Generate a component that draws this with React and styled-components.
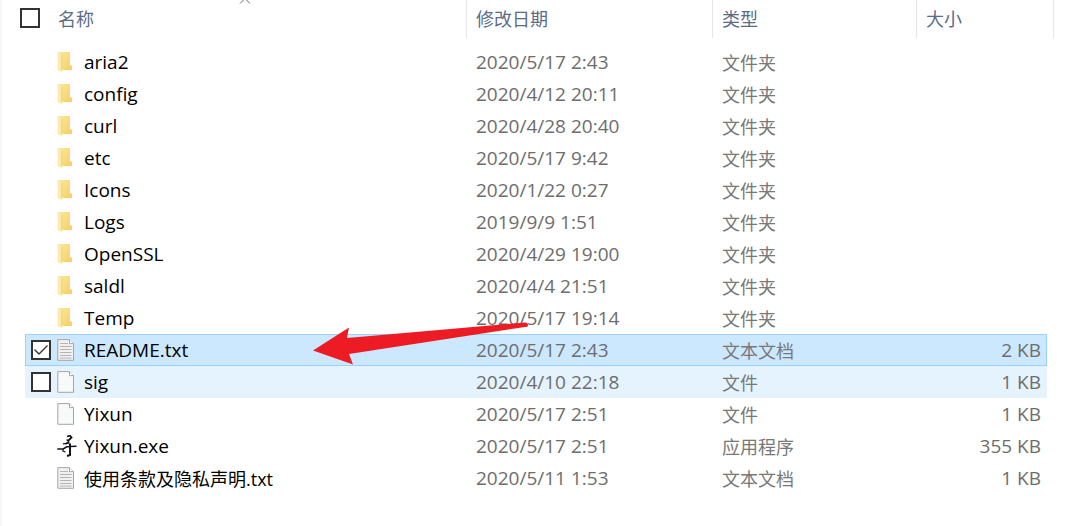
import React, { useState } from 'react';
import styled, { createGlobalStyle } from 'styled-components';

const GlobalStyle = createGlobalStyle`
  * {
    box-sizing: border-box;
  }
  body {
    margin: 0;
    background: #fff;
    font-family: "Open Sans", "Noto Sans CJK SC", sans-serif;
    font-size: 18px;
  }
`

const Pane = styled.main`
  min-height: 100vh;
  padding-right: 26px;
  border-left: 2px solid #f7f7f7;
  overflow: hidden;
`

const FileTable = styled.table`
  display: block;
  thead, tbody {
    display: block;
  }
`

const HeadRow = styled.tr`
  display: grid;
  grid-template-columns: 1fr 246px 204px 137px;
  height: 38px;
  margin-bottom: 8px;
`

const HeadCell = styled.th`
  position: relative;
  display: flex;
  align-items: center;
  gap: 18px;
  padding: 0 0 3px ${props => (props.$first ? 18 : 9)}px;
  border-right: 1px solid #e5e5e5;
  color: #5a6c86;
  font-weight: 400;
`

const SortMark = styled.svg`
  position: absolute;
  top: -3px;
  left: 51%;
  width: 12px;
  height: 7px;
`

const Row = styled.tr`
  display: grid;
  grid-template-columns: 1fr 246px 204px 130px;
  height: 32px;
  margin: 0 7px 0 23px;
  background: ${props => (props.$selected ? '#cce8ff' : props.$hovered ? '#e5f3ff' : 'transparent')};
  box-shadow: ${props => (props.$selected ? 'inset 0 0 0 1px #99d1ff' : 'none')};
`

const Cell = styled.td`
  position: relative;
  display: flex;
  align-items: center;
  justify-content: ${props => (props.$right ? 'flex-end' : 'flex-start')};
  padding: 0 6px 0 9px;
  color: ${props => (props.$latin ? '#6d6d6d' : '#787878')};
  font-size: ${props => (props.$latin ? 19 : 18)}px;
  white-space: nowrap;
`

const NameCell = styled(Cell)`
  padding-left: 6px;
  color: #000;
`

const Check = styled.input`
  appearance: none;
  flex: none;
  width: 20px;
  height: 20px;
  margin: 0;
  border: 2px solid #333;
  background: #fff;
  visibility: ${props => (props.$shown ? 'visible' : 'hidden')};
  &:checked {
    background: #fff url("data:image/svg+xml,%3Csvg xmlns='http://www.w3.org/2000/svg' viewBox='0 0 16 16'%3E%3Cpath d='M1.5 7.5l4.5 4.5 8.500-8.500' fill='none' stroke='%23333' stroke-width='1.400'/%3E%3C/svg%3E") center / 16px 16px no-repeat;
  }
`

const IconBox = styled.span`
  display: flex;
  flex: none;
  width: 20px;
  height: 22px;
  margin: 0 7px 0 6px;
`

const Arrow = styled.svg`
  position: absolute;
  top: -13px;
  left: -155px;
  width: 218px;
  height: 44px;
  pointer-events: none;
`

const FolderIcon = () => (
  <svg width="20" height="22" viewBox="0 0 20 22" aria-hidden="true">
    <defs>
      <linearGradient id="folder" x1="0" y1="0" x2="1" y2="1">
        <stop offset="0" stopColor="#fbe7a0" />
        <stop offset="1" stopColor="#f5cf66" />
      </linearGradient>
    </defs>
    <path d="M1 1h12v13l2 1v4H4z" fill="url(#folder)" />
    <path d="M.7 1l4 2.500v18l-4-2.800z" fill="#ffe9a6" />
    <path d="M4.700 3.500v16" stroke="#efcb6c" strokeWidth=".7" />
  </svg>
)

const PageIcon = ({ lines }) => (
  <svg width="20" height="22" viewBox="0 0 20 22" aria-hidden="true">
    <path d="M.8 .6h11.700l4 4v16.700H.8z" fill={lines ? '#f1f1f1' : '#f8f9f9'} stroke="#a6a6a6" />
    <path d="M12.500 .6v4h4" fill="#fff" stroke="#a6a6a6" />
    {lines && (
      <path d="M3 4.500h8M3 7.500h11.500M3 10.500h11.500M3 13.500h11.500M3 16.500h11.500M3 19h11.500" stroke="#b4b4b4" />
    )}
  </svg>
)

const RunnerIcon = () => (
  <svg width="20" height="22" viewBox="0 0 20 22" fill="none" stroke="#15151f" aria-hidden="true">
    <path d="M10 1.500l3-.8 1.500 1.800-2 2" strokeWidth="1.800" />
    <path d="M9.500 5l3 .5M12.500 4l-1.500 3.500-2.500 1.500" strokeWidth="1.600" />
    <path d="M6 8.800l7-.8" strokeWidth="1.200" />
    <path d="M.3 14h6l3-2 3-.5 7.200-.3" strokeWidth="1.600" />
    <path d="M6 14v2l2.500 1" strokeWidth="1.200" />
    <path d="M13 8.500v11.500l-3 1" strokeWidth="2" />
  </svg>
)

const icons = {
  folder: <FolderIcon />,
  text: <PageIcon lines />,
  file: <PageIcon />,
  app: <RunnerIcon />,
}

const files = [
  { name: 'aria2', date: '2020/5/17 2:43', type: '文件夹', icon: 'folder' },
  { name: 'config', date: '2020/4/12 20:11', type: '文件夹', icon: 'folder' },
  { name: 'curl', date: '2020/4/28 20:40', type: '文件夹', icon: 'folder' },
  { name: 'etc', date: '2020/5/17 9:42', type: '文件夹', icon: 'folder' },
  { name: 'Icons', date: '2020/1/22 0:27', type: '文件夹', icon: 'folder' },
  { name: 'Logs', date: '2019/9/9 1:51', type: '文件夹', icon: 'folder' },
  { name: 'OpenSSL', date: '2020/4/29 19:00', type: '文件夹', icon: 'folder' },
  { name: 'saldl', date: '2020/4/4 21:51', type: '文件夹', icon: 'folder' },
  { name: 'Temp', date: '2020/5/17 19:14', type: '文件夹', icon: 'folder' },
  { name: 'README.txt', date: '2020/5/17 2:43', type: '文本文档', size: '2 KB', icon: 'text', pointed: true },
  { name: 'sig', date: '2020/4/10 22:18', type: '文件', size: '1 KB', icon: 'file', hovered: true },
  { name: 'Yixun', date: '2020/5/17 2:51', type: '文件', size: '1 KB', icon: 'file' },
  { name: 'Yixun.exe', date: '2020/5/17 2:51', type: '应用程序', size: '355 KB', icon: 'app' },
  { name: '使用条款及隐私声明.txt', date: '2020/5/11 1:53', type: '文本文档', size: '1 KB', icon: 'text' },
]

const FileRow = ({ file, selected, onToggle }) => (
  <Row $selected={selected} $hovered={file.hovered}>
    <NameCell $latin={/^[\w.]+$/.test(file.name)}>
      <Check
        type="checkbox"
        aria-label={file.name}
        checked={selected}
        onChange={onToggle}
        $shown={selected || file.hovered}
      />
      <IconBox>{icons[file.icon]}</IconBox>
      {file.name}
    </NameCell>
    <Cell $latin>
      {file.date}
      {file.pointed && (
        <Arrow viewBox="0 0 218 44" aria-hidden="true">
          <path d="M1 29.500L37 6.500l-2 10.500L213 1.500q3 .5 3 2.500t-3 2L37 33l4 10.500z" fill="#ed1c24" />
        </Arrow>
      )}
    </Cell>
    <Cell>{file.type}</Cell>
    <Cell $latin $right>{file.size}</Cell>
  </Row>
)

const App = () => {
  const [selected, setSelected] = useState(['README.txt']);

  const toggle = name => setSelected(
    selected.includes(name) ? selected.filter(n => n !== name) : [...selected, name]
  );
  const all = selected.length === files.length;

  return (
    <Pane>
      <GlobalStyle />
      <FileTable>
        <thead>
          <HeadRow>
            <HeadCell $first>
              <Check
                type="checkbox"
                aria-label="名称"
                checked={all}
                onChange={() => setSelected(all ? [] : files.map(f => f.name))}
                $shown
              />
              名称
              <SortMark viewBox="0 0 12 7" aria-hidden="true">
                <path d="M1 6.500l5-5 5 5" fill="none" stroke="#6d6d6d" />
              </SortMark>
            </HeadCell>
            <HeadCell>修改日期</HeadCell>
            <HeadCell>类型</HeadCell>
            <HeadCell>大小</HeadCell>
          </HeadRow>
        </thead>
        <tbody>
          {files.map(file => (
            <FileRow
              key={file.name}
              file={file}
              selected={selected.includes(file.name)}
              onToggle={() => toggle(file.name)}
            />
          ))}
        </tbody>
      </FileTable>
    </Pane>
  )
};

export default App;
